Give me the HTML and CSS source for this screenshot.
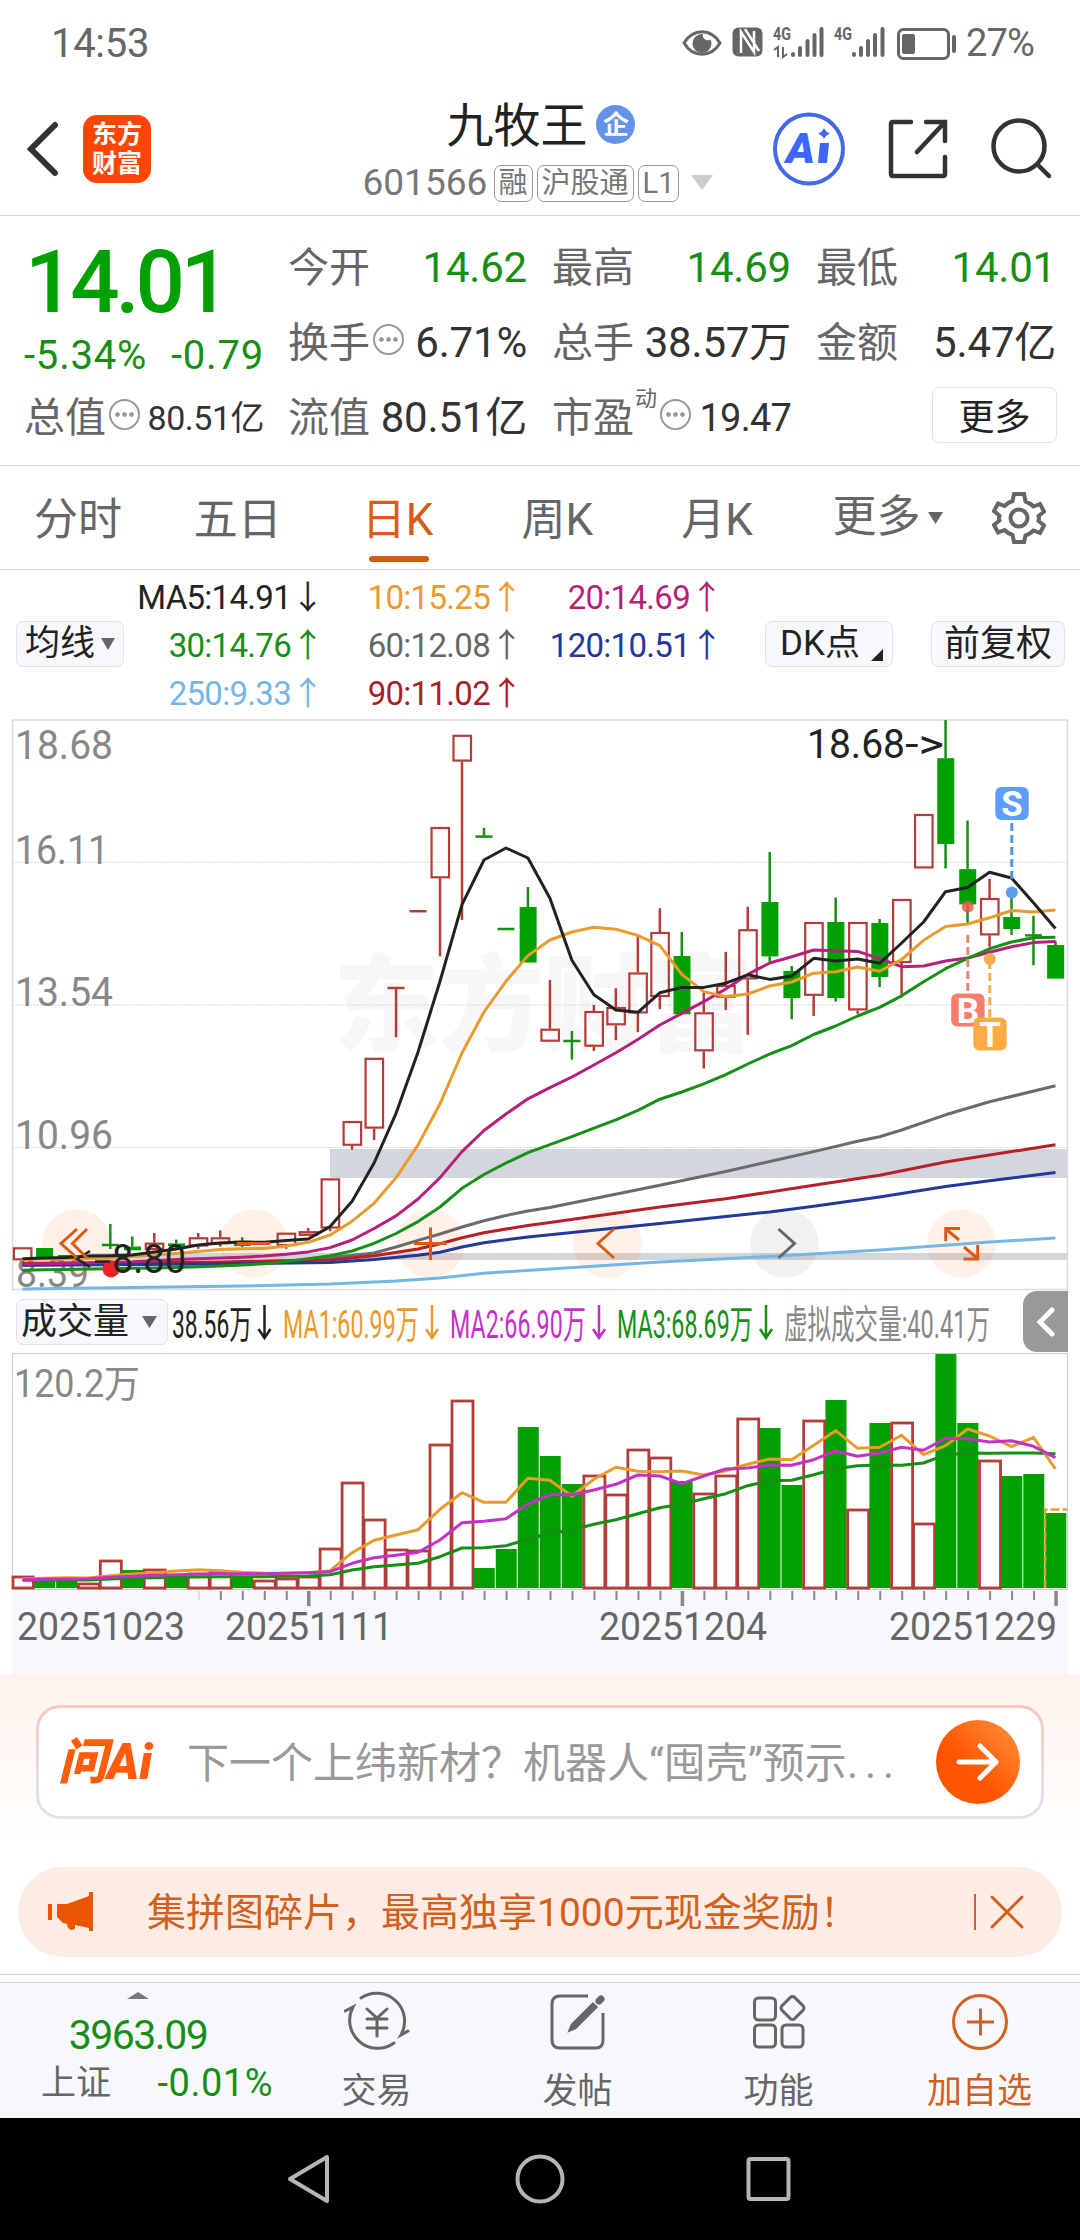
FILE: index.html
```html
<!DOCTYPE html>
<html lang="zh-CN">
<head>
    <meta charset="UTF-8">
    <meta name="viewport" content="width=device-width, initial-scale=1.0">
    <title>九牧王 601566</title>
    <link rel="stylesheet" href="styles.css">
</head>
<body>
    <div class="status-bar">
        <span class="clock">14:53</span>
        <svg class="status-icons" width="276" height="40" viewBox="682 22 276 40">
            <g fill="none" stroke="#666" stroke-width="3">
                <path d="M684 41c9-15 27-15 36 0c-9 15-27 15-36 0z"/>
                <rect x="898.500" y="27.500" width="50" height="29" rx="5"/>
            </g>
            <path d="M702 32a9.500 9.500 0 1 0 9.500 9.500a9.500 9.500 0 0 0-1-4a5 5 0 0 1-7.500-5.500z" fill="#666"/>
            <rect x="732.500" y="25.500" width="30" height="29" rx="6" fill="#666"/>
            <path d="M741 51V30l13 20V29M745 27l14 22" stroke="#fff" stroke-width="2.500" fill="none"/>
            <g fill="#666" class="net-label">
                <text x="773" y="38" textLength="18" lengthAdjust="spacingAndGlyphs">4G</text>
                <text x="834" y="38" textLength="18" lengthAdjust="spacingAndGlyphs">4G</text>
            </g>
            <path d="M774 48l4-3v10M783 45v10l4-3" fill="none" stroke="#666" stroke-width="2"/>
            <g stroke="#666" stroke-width="4" stroke-linecap="round">
                <path d="M793 52v1M800 46v7M807.500 39v14M814.500 33v20M821.500 27v26"/>
                <path d="M854 52v1M861 46v7M868 39v14M875 33v20M882.500 27v26"/>
            </g>
            <rect x="902" y="32" width="13" height="20" rx="2" fill="#666"/>
            <path d="M954 35v14" stroke="#666" stroke-width="4" stroke-linecap="round"/>
        </svg>
        <span class="battery">27%</span>
    </div>

    <header>
        <div class="header-left">
            <svg width="34" height="58" viewBox="0 0 34 58"><path d="M30 5L6 29L30 53" fill="none" stroke="#333" stroke-width="6" stroke-linecap="round"/></svg>
            <div class="brand">东方<br>财富</div>
        </div>
        <div class="header-title">
            <h1>九牧王<span class="corp">企</span></h1>
            <p>
                <span class="code">601566</span>
                <span class="tag">融</span>
                <span class="tag">沪股通</span>
                <span class="tag">L1</span>
                <svg class="code-arrow" width="22" height="16" viewBox="0 0 22 16"><path d="M0 0h22L11 15z" fill="#ccc"/></svg>
            </p>
        </div>
        <div class="header-right">
            <svg width="72" height="74" viewBox="0 0 72 74">
                <ellipse cx="36" cy="37" rx="34" ry="34.500" fill="none" stroke="#4169e8" stroke-width="4"/>
                <text x="13" y="51" class="ai-text" textLength="29" lengthAdjust="spacingAndGlyphs">A</text>
                <path d="M47 31h9l-2 20h-9z" fill="#3c66ff"/>
                <path d="M51 16q1.500 4 6 5.500q-4.500 1.500-6 5.500q-1.500-4-6-5.500q4.500-1.500 6-5.500z" fill="#3c66ff"/>
            </svg>
            <svg width="60" height="60" viewBox="0 0 60 60" fill="none" stroke="#333" stroke-width="4.500" stroke-linecap="round">
                <path d="M23 3H5q-2 0-2 2v50q0 2 2 2h50q2 0 2-2V38M38 3h19v19M56 4L29 33"/>
            </svg>
            <svg width="60" height="62" viewBox="0 0 60 62" fill="none" stroke="#333" stroke-width="4.500" stroke-linecap="round">
                <circle cx="28" cy="28" r="25.500"/><path d="M47 47l11 11"/>
            </svg>
        </div>
    </header>

    <section class="quote">
        <div class="quote-main">
            <div class="price">14.01</div>
            <div class="change"><span>-5.34%</span><span>-0.79</span></div>
            <div class="cell small"><label>总值</label><i class="dots"></i><b>80.51亿</b></div>
        </div>
        <div class="quote-grid">
            <div class="cell"><label>今开</label><b class="green">14.62</b></div>
            <div class="cell"><label>最高</label><b class="green">14.69</b></div>
            <div class="cell"><label>最低</label><b class="green">14.01</b></div>
            <div class="cell"><label>换手</label><i class="dots"></i><b>6.71%</b></div>
            <div class="cell"><label>总手</label><b>38.57万</b></div>
            <div class="cell"><label>金额</label><b>5.47亿</b></div>
            <div class="cell"><label>流值</label><b>80.51亿</b></div>
            <div class="cell pe"><label>市盈<sup>动</sup></label><i class="dots"></i><b>19.47</b></div>
            <div class="cell"><button class="more">更多</button></div>
        </div>
    </section>

    <nav class="tabs">
        <a>分时</a>
        <a>五日</a>
        <a class="active">日K</a>
        <a>周K</a>
        <a>月K</a>
        <a class="tab-more">更多<svg width="15" height="12" viewBox="0 0 15 12"><path d="M0 0h15L7.500 12z" fill="#666"/></svg></a>
        <svg class="gear" width="54" height="56" viewBox="-27 -28 54 56" fill="none" stroke="#666" stroke-width="4">
            <path d="M-5-24h10l1.500 7.500q4.500 1.500 8 5l6.500-2.500l4 7.500l-5.500 4.500q1 2.500 0 5l5.500 4.500l-4 7.500l-6.500-2.500q-3.500 3.500-8 5L5 24H-5l-1.500-7q-4.500-1.500-8-5l-6.500 2.500l-4-7.500l5.500-4.500q-1-2.500 0-5l-5.500-4.500l4-7.500l6.500 2.500q3.500-3.500 8-5z"/>
            <circle r="8.500"/>
        </svg>
    </nav>

    <section class="ma">
        <button class="chip">均线<svg width="14" height="12" viewBox="0 0 14 12"><path d="M0 0h14L7 12z" fill="#666"/></svg></button>
        <div class="ma-grid">
            <span class="c5">MA5:14.91<i>↓</i></span><span class="c10">10:15.25<i>↑</i></span><span class="c20">20:14.69<i>↑</i></span>
            <span class="c30">30:14.76<i>↑</i></span><span class="c60">60:12.08<i>↑</i></span><span class="c120">120:10.51<i>↑</i></span>
            <span class="c250">250:9.33<i>↑</i></span><span class="c90">90:11.02<i>↑</i></span>
        </div>
        <button class="chip dk">DK点<svg width="12" height="12" viewBox="0 0 12 12"><path d="M12 0v12H0z" fill="#222"/></svg></button>
        <button class="chip">前复权</button>
    </section>

    <svg id="kline" class="chart" width="1080" height="579" viewBox="0 712 1080 579"></svg>

    <section class="volume-bar">
        <button class="chip">成交量<svg width="15" height="12" viewBox="0 0 15 12"><path d="M0 0h15L7.500 12z" fill="#666"/></svg></button>
        <svg class="vol-legend" width="855" height="60" viewBox="168 1291 855 60">
            <text x="172" y="1337" fill="#222" textLength="80" lengthAdjust="spacingAndGlyphs">38.56万</text>
            <text x="283" y="1337" fill="#eb9a2c" textLength="136" lengthAdjust="spacingAndGlyphs">MA1:60.99万</text>
            <text x="450" y="1337" fill="#c531c8" textLength="136" lengthAdjust="spacingAndGlyphs">MA2:66.90万</text>
            <text x="617" y="1337" fill="#159015" textLength="136" lengthAdjust="spacingAndGlyphs">MA3:68.69万</text>
            <text x="784" y="1337" fill="#888" textLength="206" lengthAdjust="spacingAndGlyphs">虚拟成交量:40.41万</text>
            <g fill="none" stroke-width="2.500">
                <path d="M264.500 1304v33M258.500 1328l6 9l6-9" stroke="#222"/>
                <path d="M432 1304v33M426 1328l6 9l6-9" stroke="#eb9a2c"/>
                <path d="M599 1304v33M593 1328l6 9l6-9" stroke="#c531c8"/>
                <path d="M766 1304v33M760 1328l6 9l6-9" stroke="#159015"/>
            </g>
        </svg>
        <div class="drawer"><svg width="18" height="30" viewBox="0 0 18 30"><path d="M15 3L3 15L15 27" fill="none" stroke="#fff" stroke-width="5" stroke-linecap="round"/></svg></div>
    </section>

    <svg id="volume" class="chart" width="1080" height="323" viewBox="0 1352 1080 323"></svg>

    <section class="ask">
        <div class="ask-box">
            <span class="ask-logo">问Ai</span>
            <span class="ask-text">下一个上纬新材？机器人“囤壳”预示<em>...</em></span>
            <span class="ask-go"><svg width="44" height="40" viewBox="0 0 44 40"><path d="M3 20h37M24 4l16 16l-16 16" fill="none" stroke="#fff" stroke-width="5" stroke-linecap="round" stroke-linejoin="round"/></svg></span>
        </div>
    </section>

    <section class="notice">
        <svg width="46" height="40" viewBox="0 0 46 40" fill="#ea5504"><path d="M0 12h4v16H0zM9 12h10L41 4V0h4v39h-4v-3l-14-3v4l-4 1l-3-2l-1-4l-4-1l-6-6z"/></svg>
        <span class="notice-text">集拼图碎片，最高独享1000元现金奖励！</span>
        <i class="notice-line"></i>
        <svg width="34" height="34" viewBox="0 0 34 34"><path d="M2 2l30 30M32 2L2 32" stroke="#d2601f" stroke-width="3" stroke-linecap="round"/></svg>
    </section>

    <footer>
        <div class="index">
            <svg width="22" height="8" viewBox="0 0 22 8"><path d="M11 0L22 7H0z" fill="#777"/></svg>
            <div class="index-value">3963.09</div>
            <div class="index-row"><span>上证</span><b>-0.01%</b></div>
        </div>
        <div class="action">
            <svg width="66" height="60" viewBox="-33 -30 66 60" fill="none" stroke="#666" stroke-width="3" stroke-linecap="round">
                <path d="M-16-23A28 28 0 0 1 24 14l7-4M-32-10l8-4A28 28 0 0 0 17 22"/>
                <path d="M-10-12L0-3L10-12M0-3V15M-10-2h20M-10 7h20"/>
            </svg>
            <span>交易</span>
        </div>
        <div class="action">
            <svg width="56" height="60" viewBox="0 0 56 60" fill="none" stroke="#666" stroke-width="3">
                <path d="M38 5H10q-8 0-8 8v36q0 8 8 8h36q7 0 7-8V22"/>
                <path d="M20 39l2-5L43 13l3 3L25 37z" fill="#666"/>
                <path d="M49 10l2-2" stroke-width="7" stroke-linecap="round"/>
            </svg>
            <span>发帖</span>
        </div>
        <div class="action">
            <svg width="56" height="60" viewBox="0 0 56 60" fill="none" stroke="#666" stroke-width="3">
                <rect x="3.500" y="7" width="21" height="22" rx="4"/>
                <rect x="3.500" y="34" width="21" height="22" rx="4"/>
                <rect x="31" y="34" width="21" height="22" rx="4"/>
                <rect x="32.500" y="8" width="18" height="18" rx="3" transform="rotate(45 41.500 17)"/>
            </svg>
            <span>功能</span>
        </div>
        <div class="action orange">
            <svg width="60" height="60" viewBox="0 0 60 60" fill="none" stroke="#d2601f" stroke-width="3">
                <circle cx="30" cy="31" r="26.500"/><path d="M17 31h27M30.500 17.500v27"/>
            </svg>
            <span>加自选</span>
        </div>
    </footer>

    <div class="android-nav">
        <svg width="48" height="52" viewBox="0 0 48 52"><path d="M41 4v44L4 26z" fill="none" stroke="#b5b5b5" stroke-width="4" stroke-linejoin="round"/></svg>
        <svg width="52" height="52" viewBox="0 0 52 52"><circle cx="26" cy="26" r="22.500" fill="none" stroke="#b5b5b5" stroke-width="4"/></svg>
        <svg width="48" height="52" viewBox="0 0 48 52"><rect x="2.500" y="6" width="40" height="40" rx="2" fill="none" stroke="#b5b5b5" stroke-width="4"/></svg>
    </div>

    <script src="charts.js"></script>
</body>
</html>
```

FILE: styles.css
```css
* {
    margin: 0;
    padding: 0;
    box-sizing: border-box;
}

body {
    width: 1080px;
    height: 2240px;
    overflow: hidden;
    background-color: #fff;
    color: #333;
    font-family: Roboto, "Noto Sans CJK SC", sans-serif;
    line-height: 1.2;
}

svg {
    display: block;
    flex: none;
}

button {
    font-family: inherit;
    color: #222;
}

i, em {
    font-style: normal;
}

/* status bar */
.status-bar {
    height: 86px;
    padding: 1px 45px 0 51px;
    display: flex;
    align-items: center;
    color: #666;
    font-size: 40px;
}

.clock {
    flex: 1;
    letter-spacing: -0.3px;
}

.net-label {
    font-size: 18px;
    font-weight: bold;
}

.battery {
    width: 77px;
    padding-left: 8px;
    font-size: 38px;
    letter-spacing: -0.8px;
}

/* header */
header {
    height: 130px;
    border-bottom: 1px solid #d6d6d6;
    display: grid;
    grid-template-columns: 1fr auto 1fr;
    align-items: center;
}

.header-left {
    display: flex;
    align-items: center;
    padding: 0 0 4px 25px;
    gap: 24px;
}

.brand {
    width: 68px;
    height: 68px;
    padding-top: 5px;
    border-radius: 14px;
    background-color: #ff4500;
    color: #fff;
    font-size: 25px;
    line-height: 29px;
    font-weight: 700;
    text-align: center;
}

.header-title {
    margin-left: -4px;
}

.header-title h1 {
    display: flex;
    justify-content: center;
    align-items: center;
    gap: 9px;
    height: 60px;
    padding-top: 7px;
    margin-left: 6px;
    color: #222;
    font-size: 47px;
    font-weight: 400;
}

.corp {
    width: 39px;
    height: 39px;
    margin-bottom: 3px;
    border-radius: 50%;
    background-color: #6492e8;
    color: #fff;
    font-size: 26px;
    line-height: 40px;
    font-weight: 700;
    text-align: center;
}

.header-title p {
    display: flex;
    align-items: center;
    gap: 4px;
    height: 56px;
    padding-top: 5px;
    color: #777;
}

.code {
    width: 127px;
    font-size: 37px;
}

.tag {
    height: 37px;
    padding: 0 4px;
    border: 1.5px solid #999;
    border-radius: 7px;
    font-size: 29px;
    line-height: 35px;
}

.code-arrow {
    margin-left: 8px;
}

.header-right {
    display: flex;
    align-items: center;
    justify-content: flex-end;
    gap: 43px;
    padding: 0 29px 3px 0;
}

.ai-text {
    fill: #3c66ff;
    font-size: 43px;
    font-weight: 900;
    font-style: italic;
}

/* quote */
.quote {
    height: 250px;
    display: flex;
    gap: 24px;
    padding: 15px 24px 0;
    border-bottom: 1px solid #d6d6d6;
}

.quote-main {
    width: 240px;
}

.price {
    height: 100px;
    padding: 1px 0 0 1px;
    color: #00a000;
    font-size: 87px;
    line-height: 100px;
    font-weight: 500;
    letter-spacing: -4.2px;
}

.change {
    height: 50px;
    display: flex;
    justify-content: space-between;
    color: #159015;
    font-size: 40px;
    line-height: 50px;
    letter-spacing: 0.8px;
}

.quote-grid {
    flex: 1;
    display: grid;
    grid-template-columns: 239px 239px 240px;
    grid-template-rows: 75px 75px 75px;
    column-gap: 25px;
}

.cell {
    height: 75px;
    display: flex;
    align-items: center;
    white-space: nowrap;
}

.cell label {
    position: relative;
    color: #666;
    font-size: 41px;
}

.cell b {
    margin-left: auto;
    color: #333;
    font-size: 42px;
    font-weight: 400;
    letter-spacing: -0.2px;
}

.cell .green {
    color: #159015;
}

.small b {
    font-size: 34px;
    letter-spacing: -0.5px;
}

.pe b {
    font-size: 38px;
    letter-spacing: -0.8px;
}

.cell sup {
    position: absolute;
    left: 83px;
    top: -8px;
    font-size: 22px;
}

.pe .dots {
    margin-left: 26px;
}

.dots {
    width: 31px;
    height: 31px;
    margin: 0 0 8px 3px;
    border: 2px solid #999;
    border-radius: 50%;
    background: radial-gradient(circle, #999 2px, transparent 2.5px) 50% 50% / 7px 27px repeat-x;
    background-clip: content-box;
    padding: 0 3px;
}

.more {
    width: 125px;
    height: 56px;
    margin: 0 -1px 7px auto;
    padding-bottom: 3px;
    border: 1.5px solid #e3e3e3;
    border-radius: 7px;
    background-color: #fff;
    font-size: 36px;
}

/* tabs */
.tabs {
    height: 104px;
    margin-left: -2px;
    display: flex;
    align-items: center;
    border-bottom: 1px solid #d6d6d6;
}

.tabs a {
    position: relative;
    width: 159.8px;
    height: 104px;
    text-align: center;
    color: #666;
    font-size: 44px;
    line-height: 109px;
}

.tabs .active {
    color: #d95b16;
}

.tabs .active::after {
    content: "";
    position: absolute;
    left: 51px;
    bottom: 8px;
    width: 60px;
    height: 6px;
    border-radius: 3px;
    background-color: #d95b16;
}

.tabs .tab-more {
    display: flex;
    align-items: center;
    justify-content: center;
    gap: 8px;
    width: 182px;
}

.gear {
    margin-left: 13px;
}

/* moving averages */
.ma {
    height: 142px;
    padding: 6px 15px 0 16px;
    display: flex;
    align-items: center;
}

.chip {
    height: 46px;
    display: flex;
    align-items: center;
    justify-content: center;
    gap: 6px;
    border: 1.5px solid #dfe2e6;
    border-radius: 7px;
    background-color: #f7f8fb;
    font-size: 35px;
    line-height: 42px;
    white-space: nowrap;
}

.ma .chip {
    width: 108px;
}

.ma .chip:last-child {
    width: 134px;
    font-size: 36px;
}

.ma .dk {
    width: 128px;
    margin: 0 38px 0 auto;
    gap: 11px;
    padding-left: 5px;
}

.ma .dk svg {
    align-self: flex-end;
    margin-bottom: 5px;
}

.ma-grid {
    display: grid;
    grid-template-columns: 200px 199px 200px;
    grid-template-rows: 48px 48px 48px;
    padding-top: 3px;
    font-size: 33px;
    line-height: 48px;
    letter-spacing: -0.7px;
    text-align: right;
    white-space: nowrap;
}

.ma-grid i {
    display: inline-block;
    width: 33px;
    text-align: center;
    font-family: "Noto Sans CJK SC", sans-serif;
    line-height: 40px;
}

.c5 { color: #222; }
.c10 { color: #eb9a2c; }
.c20 { color: #b81f7c; }
.c30 { color: #159015; }
.c60 { color: #666; }
.c90 { color: #a82028; }
.c120 { color: #22389c; }
.c250 { color: #74b6e6; }

/* charts */
.chart text {
    font-family: Roboto, "Noto Sans CJK SC", sans-serif;
}

.volume-bar {
    height: 61px;
    padding-left: 16px;
    display: flex;
    align-items: center;
}

.volume-bar .chip {
    width: 152px;
    padding-left: 4px;
    justify-content: flex-start;
    gap: 13px;
    font-size: 36px;
}

.vol-legend {
    font-size: 39px;
}

.drawer {
    width: 45px;
    height: 61px;
    display: flex;
    align-items: center;
    justify-content: center;
    border-radius: 14px 0 0 14px;
    background-color: #999;
}

/* ask ai */
.ask {
    height: 168px;
    padding: 30px 36px 0;
    background: linear-gradient(#fff2ec, #fff);
}

.ask-box {
    height: 114px;
    display: flex;
    align-items: center;
    padding: 0 21px 0 19px;
    border: 3px solid transparent;
    border-radius: 24px;
    background: linear-gradient(#fff, #fff) padding-box, linear-gradient(#f6c8c0, #dfe6f1) border-box;
}

.ask-logo {
    width: 129px;
    padding-top: 2px;
    color: #ff5c0c;
    font-size: 49px;
    font-weight: 900;
    font-style: italic;
    white-space: nowrap;
}

.ask-text {
    flex: 1;
    padding-top: 4px;
    color: #999;
    font-size: 42px;
    white-space: nowrap;
}

.ask-text em {
    letter-spacing: 7px;
}

.ask-go {
    width: 84px;
    height: 84px;
    display: flex;
    align-items: center;
    justify-content: center;
    border-radius: 50%;
    background: linear-gradient(225deg, #ff9440, #ff5500 60%);
}

.notice {
    height: 90px;
    margin: 24px 18px 17px;
    padding: 0 38px 0 30px;
    display: flex;
    align-items: center;
    border-radius: 45px;
    background-color: #fcece3;
}

.notice-text {
    flex: 1;
    padding: 2px 0 0 53px;
    color: #d2601f;
    font-size: 39px;
}

.notice-line {
    width: 2px;
    height: 36px;
    margin-right: 14px;
    background-color: #d2601f;
}

/* bottom bar */
footer {
    height: 144px;
    padding-top: 8px;
    display: flex;
    border-top: 1px solid #d0d4d8;
    background: linear-gradient(#d0d4d8, #d0d4d8) 0 7px / 100% 1px no-repeat, linear-gradient(#fff, #fff) 0 0 / 100% 7px no-repeat, #f7f8fb;
}

.index {
    width: 276px;
    display: flex;
    flex-direction: column;
    align-items: center;
    padding-top: 9px;
}

.index-value {
    margin-top: 10px;
    color: #159015;
    font-size: 41px;
    line-height: 50px;
    letter-spacing: -1.5px;
}

.index-row {
    width: 232px;
    margin-left: 38px;
    display: flex;
    align-items: center;
    justify-content: space-between;
    color: #666;
    font-size: 35px;
    line-height: 47px;
}

.index-row b {
    color: #159015;
    font-size: 38px;
    font-weight: 400;
    letter-spacing: 0.5px;
}

.action {
    width: 201px;
    padding-top: 8px;
    display: flex;
    flex-direction: column;
    align-items: center;
    gap: 17px;
    color: #666;
    font-size: 35px;
    line-height: 47px;
}

.orange {
    color: #d2601f;
}

.android-nav {
    height: 122px;
    display: flex;
    align-items: center;
    justify-content: center;
    gap: 180px;
    background-color: #000;
}
```

FILE: charts.js
```js
const UP = '#b43c3a';
const DOWN = '#00a000';
const X0 = 22.4;
const STEP = 21.98;
const x = i => X0 + STEP * i;

// direction, high, body top, body bottom, low
const candles = [
    ['r', 1247.3, 1247.3, 1260.3, 1260.3], ['g', 1248, 1248, 1258.5, 1258.5], ['g', 1255, 1255, 1259, 1259],
    ['g', 1224, 1245, 1245, 1249], ['g', 1236.5, 1246.5, 1250.3, 1250.3], ['r', 1233, 1242.7, 1250, 1250],
    ['g', 1239.6, 1243.4, 1246, 1248], ['r', 1233, 1237.3, 1246.5, 1248.8], ['r', 1230.4, 1237.3, 1244, 1246.5],
    ['g', 1237.3, 1240.8, 1246, 1247], ['r', 1243, 1243, 1245, 1245], ['r', 1232.7, 1232.7, 1246, 1248.8],
    ['r', 1228, 1231.2, 1235.8, 1235.8], ['r', 1178.4, 1178.4, 1228.5, 1231.2], ['r', 1121, 1121, 1145.8, 1149.7],
    ['r', 1057.8, 1057.8, 1128.6, 1140], ['r', 988, 988, 988, 1037.2], ['r', 911.2, 911.2, 911.2, 911.2],
    ['r', 827, 827, 878.3, 956.4], ['r', 734.8, 734.8, 761.6, 920], ['g', 827.8, 836.6, 836.6, 836.6],
    ['g', 929, 929, 929, 929], ['g', 887, 907, 962.5, 962.5], ['r', 980, 1028.7, 1041.7, 1041.7],
    ['g', 1031, 1041, 1041, 1059.7], ['r', 1005, 1011, 1046.7, 1051], ['r', 988.2, 1007, 1025.3, 1040.2],
    ['r', 935.4, 972.5, 1013.4, 1032.2], ['r', 908.2, 932, 997, 1009.2], ['g', 932, 956, 1014.2, 1014.2],
    ['r', 992.8, 1012.3, 1051.3, 1068.5], ['r', 951.8, 985, 997.7, 1010], ['r', 906.7, 929.2, 979.4, 1035],
    ['g', 852, 902, 956.4, 961.8], ['g', 966, 971, 998, 1019.2], ['r', 922, 922, 995.8, 1016],
    ['g', 897.5, 922, 998, 1001.6], ['r', 922, 922, 1010.4, 1013.8], ['g', 919, 923, 977, 987],
    ['r', 899, 899, 963, 996.6], ['r', 814, 814, 868.4, 868.4], ['g', 720, 758.2, 844, 868.4],
    ['g', 820.6, 869.2, 904.4, 924], ['r', 879, 898, 935.4, 946.8], ['g', 891.4, 917, 929, 935],
    ['g', 915.8, 935.4, 935.4, 965.2], ['g', 941, 945, 978.6, 978.6]
];

const ma = {
    '#6b6b6b': [[0, 1265], [9, 1263], [13, 1260], [16, 1253], [17, 1247], [18, 1240.4], [19, 1234], [20, 1227], [21, 1220.8], [22, 1215.5], [23, 1211], [24, 1207.5], [29, 1185.3], [32, 1171.5], [34, 1161.5], [36, 1151.6], [38, 1141.2], [39, 1136.7], [40, 1130], [42, 1114.8], [44, 1101.8], [47, 1085.8]],
    '#b81f26': [[0, 1263.3], [9, 1262], [14, 1260], [16, 1255.7], [18, 1249], [19, 1243.8], [20, 1237.7], [21, 1232.7], [23, 1225.4], [24, 1222.4], [29, 1207], [32, 1198.7], [36, 1185.3], [39, 1175.3], [42, 1162], [47, 1144.7]],
    '#22389c': [[0, 1265.2], [9, 1264], [14, 1262.5], [16, 1259.5], [18, 1255.3], [19, 1252.2], [20, 1247], [21, 1242.7], [23, 1237], [29, 1223.5], [32, 1216.6], [34, 1212], [36, 1206.3], [39, 1197], [42, 1186.4], [44, 1180.7], [47, 1172.6]],
    '#74b6e6': [[0, 1289], [10, 1286], [14, 1284], [17, 1281], [19, 1278], [21, 1273.3], [24, 1269], [29, 1262], [34, 1256.5], [39, 1250], [44, 1242], [47, 1238]],
    '#b81f7c': [1264, 1263.7, 1263.3, 1263, 1262, 1261.8, 1260.7, 1259.5, 1258.7, 1258, 1257.2, 1256, 1254.2, 1251.9, 1247.6, 1240, 1228.5, 1215.9, 1199, 1177.6, 1151.6, 1130.5, 1114, 1098.8, 1087.7, 1077, 1065, 1052.8, 1039.5, 1025, 1013.4, 1001.6, 989, 974.4, 963, 956.8, 950, 950.7, 951.4, 958.7, 966.7, 966, 961, 958, 952.2, 946.8, 942.6, 941.5],
    '#159015': [1270.2, 1269.8, 1269.5, 1269, 1268.7, 1268.3, 1268, 1267.5, 1266.8, 1266, 1265, 1263.7, 1261.4, 1258.7, 1255.7, 1251, 1243.4, 1233.5, 1221.6, 1207, 1188.3, 1174.5, 1163, 1152.7, 1144.7, 1136.7, 1128.2, 1119.8, 1110.3, 1099.2, 1092, 1083.8, 1074.7, 1064, 1054, 1045.6, 1034.5, 1026, 1016, 1007.3, 995.8, 981.7, 968.7, 958.3, 948.8, 942, 937.7, 937.3],
    '#eb9a2c': [1259.5, 1259, 1259, 1258.7, 1258, 1256.5, 1255, 1253.4, 1251.5, 1249.6, 1248.8, 1248.4, 1246, 1242.3, 1235, 1221.2, 1203.3, 1177.6, 1145, 1103.8, 1053, 1012, 981.3, 955.6, 940, 932, 927.3, 929.2, 935.4, 945.7, 974.4, 991.6, 996.6, 994, 986, 982, 973.2, 971.7, 967, 971.3, 959.5, 940.3, 926.6, 924, 917.8, 910.5, 912, 910],
    '#222': [1258.7, 1258, 1257.5, 1256, 1255.7, 1255, 1252, 1249, 1245, 1243, 1242, 1242.3, 1240.4, 1239, 1226.6, 1201.3, 1163, 1113.3, 1052, 981.3, 904.7, 860, 848, 858, 898.2, 960.2, 994.7, 1010, 1012.3, 992.8, 987.4, 987.4, 983.2, 974.8, 979.4, 976, 958.3, 961, 959, 963.3, 943, 922, 891.7, 887.5, 872.2, 878, 902.8, 928.5]
};

// top of each volume bar
const volumes = [
    'r1576', 'g1580', 'g1579', 'r1583', 'r1560', 'g1570', 'r1569', 'g1577', 'r1573', 'r1571', 'g1576', 'r1580',
    'r1578', 'r1576', 'r1548', 'r1482', 'r1519', 'r1549', 'r1550', 'r1444', 'r1400', 'g1568', 'g1549', 'g1427',
    'g1456', 'g1484', 'r1475', 'r1494', 'r1449', 'r1457', 'g1481', 'r1493', 'r1475', 'r1418', 'g1428', 'g1485',
    'r1420', 'g1400', 'r1509', 'g1423', 'r1422', 'r1523', 'g1354', 'g1423', 'r1460', 'g1476', 'g1474', 'g1513'
];

const volMa = {
    '#159015': [1580.3, 1580.3, 1580, 1580, 1579, 1578.3, 1577.7, 1577.3, 1577, 1576.7, 1576.7, 1576.7, 1576.3, 1576, 1574.7, 1570, 1566.7, 1565, 1563.3, 1556.7, 1548, 1547.7, 1545.7, 1539.3, 1533.3, 1530, 1524.3, 1519.7, 1513.7, 1507.7, 1504, 1498.7, 1493.7, 1485.7, 1480.7, 1480.3, 1474.7, 1468.7, 1465.7, 1465, 1465.3, 1463, 1454.7, 1453, 1453.3, 1453, 1453, 1453.7],
    '#eb9a2c': [1579, 1578.3, 1577.7, 1578, 1575.7, 1574, 1572.7, 1571, 1569.7, 1570.7, 1572.3, 1573.3, 1573.3, 1572.7, 1570.7, 1552.7, 1540.3, 1535, 1529.7, 1509.3, 1492.7, 1502.3, 1502.3, 1478.3, 1480.3, 1496, 1479.3, 1467.3, 1471.3, 1471.7, 1471, 1475, 1470.7, 1464.3, 1459, 1459.7, 1445.3, 1430.7, 1448.3, 1447.3, 1435.3, 1454.7, 1445.7, 1429, 1436, 1446.7, 1437.3, 1469],
    '#c531c8': [1579.7, 1579.3, 1579, 1578.7, 1577.3, 1576.3, 1575.3, 1574.7, 1574.3, 1573.7, 1573.7, 1573.7, 1573.3, 1572.7, 1571.7, 1563.3, 1557.7, 1555.3, 1552.3, 1540, 1522.7, 1521.3, 1518.7, 1504, 1494.7, 1494.7, 1490, 1484.3, 1475, 1476, 1483.7, 1476, 1469, 1468, 1465, 1465.3, 1459.7, 1451, 1456.3, 1453, 1447.3, 1450.3, 1438.3, 1438.7, 1442, 1440.7, 1446.3, 1457.7]
};

function line(x1, y1, x2, y2, color, w, extra = '') {
    return `<line x1="${x1}" y1="${y1}" x2="${x2}" y2="${y2}" stroke="${color}" stroke-width="${w}" ${extra}/>`;
}

function text(str, tx, ty, w, size, color) {
    return `<text x="${tx}" y="${ty}" font-size="${size}" fill="${color}" textLength="${w}" lengthAdjust="spacingAndGlyphs">${str}</text>`;
}

// slow averages are given as [day, y] pairs, the others as one y per day
function polyline(points, color) {
    const d = points.map((p, i) => Array.isArray(p) ? `${x(p[0])},${p[1]}` : `${x(i)},${p}`);
    return `<polyline points="${d.join(' ')}" fill="none" stroke="${color}" stroke-width="3" stroke-linejoin="round"/>`;
}

function drawKline() {
    let s = '<rect x="12.500" y="720" width="1055" height="569.500" fill="#fff" stroke="#ddd" stroke-width="1.500"/>';
    ['东', '方', '财', '富'].forEach((c, i) => {
        s += `<text x="${333 + i * 105}" y="1043" font-size="106" font-weight="900" fill="#f7f7f8">${c}</text>`;
    });
    [862.3, 1005, 1147.5].forEach(y => s += line(13, y, 1067, y, '#ccc', 1, 'stroke-dasharray="1.500 1.500"'));
    s += '<rect x="330" y="1149" width="737" height="29" fill="#d3d6dc"/>';
    s += '<rect x="88" y="1253" width="979" height="7" fill="#d3d6d9"/>';
    s += text('18.68', 15, 759, 98, 40, '#888') + text('16.11', 15, 864, 94, 40, '#888');
    s += text('13.54', 15, 1006, 98, 40, '#888') + text('10.96', 15, 1149, 98, 40, '#888');

    [76.5, 254, 430.5, 607.5, 784.5, 961.5].forEach((cx, i) => {
        s += `<circle cx="${cx}" cy="1243.500" r="34.300" fill="${i === 4 ? '#777' : '#ff6a1f'}" fill-opacity="0.1"/>`;
    });

    candles.forEach((c, n) => {
        // day 3 is covered by the low price label
        const i = n < 3 ? n : n + 1;
        const [dir, high, top, bottom, low] = c;
        const cx = x(i);
        const color = dir === 'r' ? UP : '#159015';
        if (bottom - top < 1) {
            s += line(cx - 8.5, top, cx + 8.5, top, color, 2.5);
            if (low > high) s += line(cx, high, cx, low, color, 2.5);
        } else {
            s += line(cx, high, cx, top, color, 2.5) + line(cx, bottom, cx, low, color, 2.5);
            s += dir === 'r'
                ? `<rect x="${cx - 8.5}" y="${top + 1}" width="17.500" height="${bottom - top - 2}" fill="none" stroke="${UP}" stroke-width="2.200"/>`
                : `<rect x="${cx - 8.3}" y="${top}" width="17" height="${bottom - top}" fill="${DOWN}"/>`;
        }
    });

    s += text('8.39', 16, 1287, 73, 40, '#888');
    Object.keys(ma).forEach(color => s += polyline(ma[color], color));

    // trade marks
    s += line(1011.8, 823, 1011.8, 880, '#5294e6', 3, 'stroke-dasharray="8 4"');
    s += line(967.8, 935, 967.8, 991, '#ec8474', 3, 'stroke-dasharray="8 4"');
    s += line(989.8, 961, 989.8, 1017, '#f4ad50', 3, 'stroke-dasharray="8 4"');
    s += '<circle cx="1011.800" cy="892.500" r="6" fill="#5f9eea"/><circle cx="967.800" cy="906.700" r="6" fill="#e85a44" fill-opacity="0.85"/><circle cx="989.800" cy="959" r="6" fill="#f6ab50"/>';
    [['S', 995.3, 787, '#5e9dfb'], ['B', 951.2, 993.5, '#f77e6e'], ['T', 973.3, 1017.5, '#ffab45']].forEach(m => {
        s += `<rect x="${m[1]}" y="${m[2]}" width="33.400" height="33" rx="6" fill="${m[3]}"/>`;
        s += `<text x="${m[1] + 16.7}" y="${m[2] + 29}" font-size="35" font-weight="700" text-anchor="middle" fill="#fff">${m[0]}</text>`;
    });

    s += '<circle cx="111" cy="1269" r="8.500" fill="#ee2225"/>';
    s += text('18.68', 807, 757.5, 98, 40, '#222') + text('-&gt;', 905, 757.5, 39, 40, '#222');
    s += '<path d="M90 1251L77 1259L90 1267M95 1261.500H110" fill="none" stroke="#222" stroke-width="2.500"/>';
    s += text('8.80', 112, 1273, 74, 40, '#222');

    s += '<g fill="none" stroke="#dc5a16" stroke-width="3">';
    s += '<path d="M87 1229L72.500 1243.500L87 1258M77 1229L61 1243.500L77 1258"/>';
    s += '<path d="M237 1243.500H270M414 1243.500H447M430.500 1227.500V1260"/>';
    s += '<path d="M614 1229L598 1243.500L614 1258"/><path d="M778.500 1229L794.500 1243.500L778.500 1258" stroke="#666"/>';
    s += '<path d="M945.700 1241V1228.500H960M946 1229L959 1240M977.700 1245V1259H963.500M977 1258L964 1247"/></g>';
    document.getElementById('kline').innerHTML = s;
}

function drawVolume() {
    let s = '<rect x="12" y="1590" width="1056" height="85" fill="#f7f8fb"/>';
    s += '<rect x="12.500" y="1353.500" width="1055" height="236" fill="#fff" stroke="#ccc"/>';
    s += text('120.2万', 14, 1397, 126, 38, '#888');
    volumes.forEach((v, i) => {
        const top = Number(v.slice(1));
        const left = Math.max(x(i) - 11, 12);
        s += v[0] === 'r'
            ? `<rect x="${left + 1}" y="${top + 1}" width="${x(i) + 11 - left - 1}" height="${1587 - top}" fill="#fff" stroke="${UP}" stroke-width="2.800"/>`
            : `<rect x="${left + 0.8}" y="${top}" width="21" height="${1588 - top}" fill="${DOWN}"/>`;
    });
    s += '<path d="M1045 1588V1509.500H1067" fill="none" stroke="#eb9a2c" stroke-width="2.500" stroke-dasharray="9 3"/>';
    Object.keys(volMa).forEach(color => s += polyline(volMa[color], color));

    for (let i = 8; i < 48; i++) {
        const major = i === 13 || i === 30 || i === 47;
        const tx = x(i) + 0.6;
        s += line(tx, 1591, tx, major ? 1606 : 1600, i === 8 ? '#ddd' : '#888', major ? 3.5 : 2);
    }
    s += text('20251023', 17, 1640, 168, 38, '#666') + text('20251111', 225, 1640, 168, 38, '#666');
    s += text('20251204', 599, 1640, 168, 38, '#666') + text('20251229', 889, 1640, 168, 38, '#666');
    document.getElementById('volume').innerHTML = s;
}

drawKline();
drawVolume();
```
